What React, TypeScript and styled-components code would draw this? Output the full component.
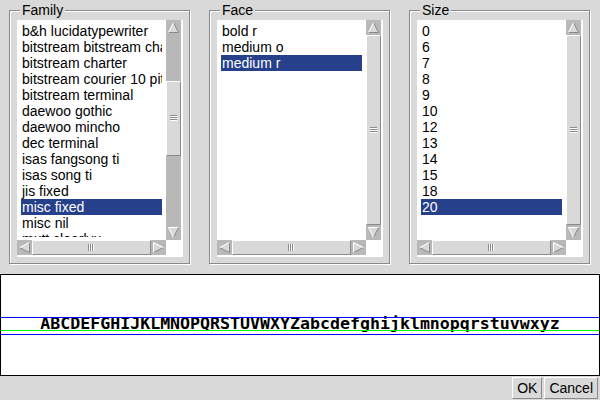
import React from "react";
import styled, { createGlobalStyle } from "styled-components";

const BG = "#d9d9d9";
const TROUGH = "#b8b8b8";
const DARK = "#8a8a8a";
const SELECT = "#27408b";

const GlobalStyle = createGlobalStyle`
  html, body {
    margin: 0;
    padding: 0;
  }
  body {
    background: ${BG};
    font-family: "Liberation Sans", Arial, sans-serif;
    font-size: 14px;
    color: #000;
  }
  * {
    box-sizing: border-box;
  }
`;

const Window = styled.div`
  width: 600px;
  height: 400px;
  overflow: hidden;
  display: flex;
  flex-direction: column;
  background: ${BG};
`;

const Chooser = styled.div`
  display: grid;
  grid-template-columns: repeat(3, 200px);
  height: 264px;
`;

const Column = styled.div`
  padding: 2px 10px 0 9px;
`;

const Group = styled.fieldset`
  margin: 0;
  padding: 2px 5px 6px 7px;
  height: 262px;
  min-inline-size: 0;
  border: 1px solid ${DARK};
  box-shadow: inset 1px 1px 0 #fff, 1px 1px 0 #fff;
`;

const Caption = styled.legend`
  margin-left: 3px;
  padding: 0 2px;
  background: ${BG};
  line-height: 16px;
`;

const ListFrame = styled.div`
  display: grid;
  grid-template-columns: 149px 15px;
  grid-template-rows: 220px 15px;
  width: 166px;
  height: 237px;
  padding: 0 2px 2px 0;
  background: #fff;
`;

const List = styled.div`
  align-self: start;
  height: 217px;
  padding: 3px 4px 0;
  overflow: hidden;
  background: #fff;
`;

const Row = styled.div<{ $selected?: boolean }>`
  height: 16px;
  line-height: 16px;
  padding-left: 1px;
  white-space: nowrap;
  overflow: hidden;
  background: ${(p) => (p.$selected ? SELECT : "transparent")};
  color: ${(p) => (p.$selected ? "#fff" : "#000")};
`;

const Scroll = styled.div<{ $vertical?: boolean }>`
  display: flex;
  flex-direction: ${(p) => (p.$vertical ? "column" : "row")};
  background: ${TROUGH};
`;

const ArrowBox = styled.div`
  flex: 0 0 15px;
  width: 15px;
  height: 15px;

  svg {
    display: block;
  }
`;

const Spacer = styled.div<{ $grow: number }>`
  flex: ${(p) => p.$grow} 1 0;
`;

const Thumb = styled.div<{ $grow: number }>`
  flex: ${(p) => p.$grow} 1 0;
  display: flex;
  align-items: center;
  justify-content: center;
  background: ${BG};
  border: 1px solid;
  border-color: #fff ${DARK} ${DARK} #fff;

  svg {
    display: block;
  }
`;

const Corner = styled.div`
  background: #fff;
`;

const Preview = styled.div`
  position: relative;
  margin-top: 10px;
  height: 102px;
  background: #fff;
  border: 1px solid #000;
  text-align: center;
`;

const Sample = styled.div`
  margin-top: 39px;
  font-family: "DejaVu Sans Mono", "Liberation Mono", monospace;
  font-weight: bold;
  font-size: 16.6px;
  line-height: 20px;
  white-space: nowrap;
`;

const Guide = styled.div<{ $top: number; $color: string }>`
  position: absolute;
  left: 0;
  right: 0;
  top: ${(p) => p.$top}px;
  height: 1px;
  background: ${(p) => p.$color};
`;

const Buttons = styled.div`
  display: flex;
  justify-content: flex-end;
  gap: 2px;
  padding: 1px 2px 0;
`;

const Button = styled.button`
  height: 22px;
  padding: 0 4px;
  margin: 0;
  font-family: "Liberation Sans", Arial, sans-serif;
  font-size: 14px;
  color: #000;
  background: ${BG};
  border: 1px solid;
  border-color: #fff ${DARK} ${DARK} #fff;
  border-radius: 0;
`;

type Dir = "up" | "down" | "left" | "right";

const arrowShapes: Record<Dir, { fill: string; light: string; dark: string }> = {
  up: { fill: "7.5,2.5 12.5,12.5 2.5,12.5", light: "2.5,12.5 7.5,2.5", dark: "7.5,2.5 12.5,12.5 2.5,12.5" },
  down: { fill: "2.5,2.5 12.5,2.5 7.5,12.5", light: "7.5,12.5 2.5,2.5 12.5,2.5", dark: "12.5,2.5 7.5,12.5" },
  left: { fill: "2.5,7.5 12.5,2.5 12.5,12.5", light: "2.5,7.5 12.5,2.5", dark: "12.5,2.5 12.5,12.5 2.5,7.5" },
  right: { fill: "2.5,2.5 12.5,7.5 2.5,12.5", light: "2.5,12.5 2.5,2.5 12.5,7.5", dark: "12.5,7.5 2.5,12.5" },
};

const Arrow = ({ dir }: { dir: Dir }) => {
  const s = arrowShapes[dir];
  return (
    <ArrowBox>
      <svg width="15" height="15" viewBox="0 0 15 15">
        <polygon points={s.fill} fill={BG} />
        <polyline points={s.dark} fill="none" stroke={DARK} strokeWidth="1" />
        <polyline points={s.light} fill="none" stroke="#fff" strokeWidth="1" />
      </svg>
    </ArrowBox>
  );
};

const Grip = ({ vertical }: { vertical?: boolean }) =>
  vertical ? (
    <svg width="7" height="7" viewBox="0 0 7 7">
      {[0, 2, 4].map((y) => (
        <g key={y}>
          <rect x="0" y={y} width="7" height="1" fill={DARK} />
          <rect x="0" y={y + 1} width="7" height="1" fill="#fff" />
        </g>
      ))}
    </svg>
  ) : (
    <svg width="7" height="7" viewBox="0 0 7 7">
      {[0, 2, 4].map((x) => (
        <g key={x}>
          <rect x={x} y="0" width="1" height="7" fill={DARK} />
          <rect x={x + 1} y="0" width="1" height="7" fill="#fff" />
        </g>
      ))}
    </svg>
  );

const ScrollBar = ({ vertical, start, size }: { vertical?: boolean; start: number; size: number }) => (
  <Scroll $vertical={vertical}>
    <Arrow dir={vertical ? "up" : "left"} />
    <Spacer $grow={start} />
    <Thumb $grow={size}>
      <Grip vertical={vertical} />
    </Thumb>
    <Spacer $grow={Math.max(0, 1 - start - size)} />
    <Arrow dir={vertical ? "down" : "right"} />
  </Scroll>
);

const families = [
  "b&h lucidatypewriter",
  "bitstream bitstream charter",
  "bitstream charter",
  "bitstream courier 10 pitch",
  "bitstream terminal",
  "daewoo gothic",
  "daewoo mincho",
  "dec terminal",
  "isas fangsong ti",
  "isas song ti",
  "jis fixed",
  "misc fixed",
  "misc nil",
  "mutt clearlyu",
];

const faces = ["bold r", "medium o", "medium r"];
const sizes = ["0", "6", "7", "8", "9", "10", "12", "13", "14", "15", "18", "20"];

type PickerProps = {
  title: string;
  items: string[];
  selected: string;
  start: number;
  size: number;
};

const Picker = ({ title, items, selected, start, size }: PickerProps) => (
  <Column>
    <Group>
      <Caption>{title}</Caption>
      <ListFrame>
        <List>
          {items.map((item) => (
            <Row key={item} $selected={item === selected}>
              {item}
            </Row>
          ))}
        </List>
        <ScrollBar vertical start={start} size={size} />
        <ScrollBar start={0} size={1} />
        <Corner />
      </ListFrame>
    </Group>
  </Column>
);

export default function App() {
  return (
    <Window>
      <GlobalStyle />
      <Chooser>
        <Picker title="Family" items={families} selected="misc fixed" start={0.247} size={0.384} />
        <Picker title="Face" items={faces} selected="medium r" start={0} size={1} />
        <Picker title="Size" items={sizes} selected="20" start={0} size={1} />
      </Chooser>
      <Preview>
        <Sample>ABCDEFGHIJKLMNOPQRSTUVWXYZabcdefghijklmnopqrstuvwxyz</Sample>
        <Guide $top={42} $color="#0000ff" />
        <Guide $top={55} $color="#00ff00" />
        <Guide $top={59} $color="#0000ff" />
      </Preview>
      <Buttons>
        <Button>OK</Button>
        <Button>Cancel</Button>
      </Buttons>
    </Window>
  );
}
